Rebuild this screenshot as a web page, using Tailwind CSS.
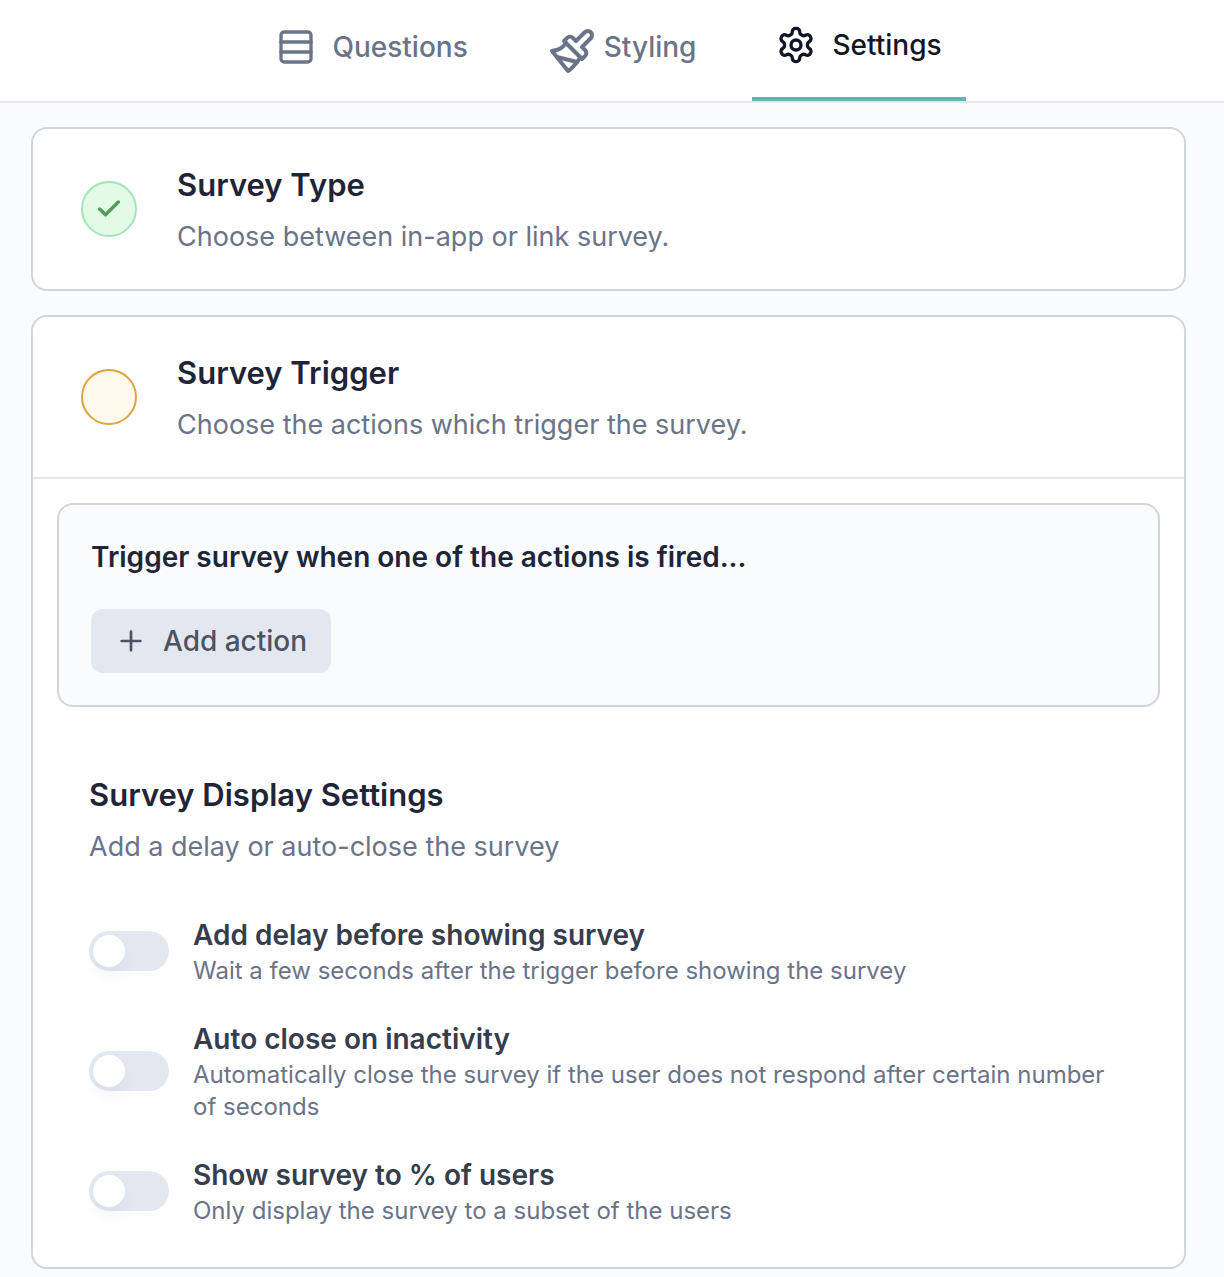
<!DOCTYPE html>
<html lang="en">
<head>
<meta charset="utf-8">
<meta name="viewport" content="width=device-width, initial-scale=1">
<title>Survey settings</title>
<script src="https://cdn.jsdelivr.net/npm/@tailwindcss/browser@4"></script>
</head>
<body class="min-h-screen bg-[#f9fbfd] font-['Inter',sans-serif] text-[#1f2536]">
<header class="border-b-2 border-gray-200 bg-white">
  <nav class="flex h-[101px] justify-center gap-8 pr-1.5 text-[28px] leading-10 font-medium text-[#6a7388]" aria-label="Survey editor">
    <a href="#questions" class="flex items-center gap-4 px-6 pb-2">
      <svg class="size-10" viewBox="0 0 24 24" fill="none" stroke="currentColor" stroke-width="2" stroke-linecap="round" stroke-linejoin="round" aria-hidden="true"><rect x="3" y="3" width="18" height="18" rx="2"/><path d="M21 9H3M21 15H3"/></svg>
      Questions
    </a>
    <a href="#styling" class="flex items-center gap-4 px-6 pb-2">
      <span class="block size-10 overflow-visible"><svg class="size-12 max-w-none" viewBox="0 0 24 24" fill="none" stroke="currentColor" stroke-width="2" stroke-linecap="round" stroke-linejoin="round" aria-hidden="true"><path d="M18.37 2.63 14 7l-1.59-1.59a2 2 0 0 0-2.82 0L8 7l9 9 1.59-1.59a2 2 0 0 0 0-2.82L17 10l4.37-4.37a2.12 2.12 0 1 0-3-3Z"/><path d="M9 8c-2 3-4 3.5-7 4l8 10c2-1 6-6 6-7"/><path d="M14.5 17.5 4.5 15"/></svg></span>
      Styling
    </a>
    <a href="#settings" aria-current="page" class="flex items-center gap-4 border-b-4 border-[#5bb9af] px-6 pb-2 text-[#111524]">
      <svg class="size-10" viewBox="0 0 24 24" fill="none" stroke="currentColor" stroke-width="2" stroke-linecap="round" stroke-linejoin="round" aria-hidden="true"><path d="M12.22 2h-.44a2 2 0 0 0-2 2v.18a2 2 0 0 1-1 1.73l-.43.25a2 2 0 0 1-2 0l-.15-.08a2 2 0 0 0-2.73.73l-.22.38a2 2 0 0 0 .73 2.73l.15.1a2 2 0 0 1 1 1.72v.51a2 2 0 0 1-1 1.74l-.15.09a2 2 0 0 0-.73 2.73l.22.38a2 2 0 0 0 2.73.73l.15-.08a2 2 0 0 1 2 0l.43.25a2 2 0 0 1 1 1.73V20a2 2 0 0 0 2 2h.44a2 2 0 0 0 2-2v-.18a2 2 0 0 1 1-1.73l.43-.25a2 2 0 0 1 2 0l.15.08a2 2 0 0 0 2.73-.73l.22-.39a2 2 0 0 0-.73-2.73l-.15-.08a2 2 0 0 1-1-1.74v-.5a2 2 0 0 1 1-1.74l.15-.09a2 2 0 0 0 .73-2.73l-.22-.38a2 2 0 0 0-2.73-.73l-.15.08a2 2 0 0 1-2 0l-.43-.25a2 2 0 0 1-1-1.73V4a2 2 0 0 0-2-2z"/><circle cx="12" cy="12" r="3"/></svg>
      Settings
    </a>
  </nav>
</header>

<main class="flex flex-col gap-6 pt-6 pr-[38px] pb-2 pl-[31px]">
  <section class="rounded-2xl border-2 border-gray-300 bg-white">
    <button type="button" aria-expanded="false" class="flex w-full items-center gap-10 px-12 py-8 text-left">
      <span class="flex size-14 shrink-0 items-center justify-center rounded-full border-2 border-[#a3e6b5] bg-[#e2fae6] text-[#4f9e5b]">
        <svg class="size-7" viewBox="0 0 24 24" fill="none" stroke="currentColor" stroke-width="3" stroke-linecap="round" stroke-linejoin="round" aria-hidden="true"><path d="M20 6 9 17l-5-5"/></svg>
      </span>
      <span class="flex flex-col gap-2">
        <span class="text-[31px] leading-12 font-semibold">Survey Type</span>
        <span class="text-[27px] leading-10 text-[#6a7388]">Choose between in-app or link survey.</span>
      </span>
    </button>
  </section>

  <section class="rounded-2xl border-2 border-gray-300 bg-white">
    <button type="button" aria-expanded="true" class="flex w-full items-center gap-10 px-12 py-8 text-left">
      <span class="size-14 shrink-0 rounded-full border-2 border-[#e3a33c] bg-[#fefaec]"></span>
      <span class="flex flex-col gap-2">
        <span class="text-[31px] leading-12 font-semibold">Survey Trigger</span>
        <span class="text-[27px] leading-10 text-[#6a7388]">Choose the actions which trigger the survey.</span>
      </span>
    </button>

    <div class="border-t-2 border-gray-200 px-6 pt-6 pb-10">
      <div class="rounded-2xl border-2 border-gray-300 bg-[#f9fbfd] p-8">
        <h2 class="text-[28px] leading-10 font-semibold">Trigger survey when one of the actions is fired...</h2>
        <button type="button" class="mt-8 flex h-16 items-center gap-4 rounded-xl bg-[#e3e8f0] px-6 text-[28px] leading-10 font-medium text-[#4d5361]">
          <svg class="size-8" viewBox="0 0 24 24" fill="none" stroke="currentColor" stroke-width="2" stroke-linecap="round" aria-hidden="true"><path d="M5 12h14M12 5v14"/></svg>
          Add action
        </button>
      </div>

      <div class="mt-16 px-8">
        <h2 class="text-[31px] leading-12 font-semibold">Survey Display Settings</h2>
        <p class="mt-2 text-[27px] leading-10 text-[#6a7388]">Add a delay or auto-close the survey</p>

        <div class="mt-12 flex flex-col gap-8">
          <div class="flex items-center gap-6">
            <input id="delay" type="checkbox" role="switch" class="flex h-10 w-20 shrink-0 appearance-none items-center rounded-full bg-[#e3e8f0] px-1 before:size-8 before:rounded-full before:bg-white before:shadow-[0_10px_15px_rgb(0_0_0/0.04)] before:content-['']">
            <label for="delay" class="flex flex-col">
              <span class="text-[28px] leading-10 font-semibold text-[#363d4d]">Add delay before showing survey</span>
              <span class="text-2xl text-[#6a7388]">Wait a few seconds after the trigger before showing the survey</span>
            </label>
          </div>
          <div class="flex items-center gap-6">
            <input id="autoclose" type="checkbox" role="switch" class="flex h-10 w-20 shrink-0 appearance-none items-center rounded-full bg-[#e3e8f0] px-1 before:size-8 before:rounded-full before:bg-white before:shadow-[0_10px_15px_rgb(0_0_0/0.04)] before:content-['']">
            <label for="autoclose" class="flex flex-col">
              <span class="text-[28px] leading-10 font-semibold text-[#363d4d]">Auto close on inactivity</span>
              <span class="text-2xl text-[#6a7388]">Automatically close the survey if the user does not respond after certain number of seconds</span>
            </label>
          </div>
          <div class="flex items-center gap-6">
            <input id="percentage" type="checkbox" role="switch" class="flex h-10 w-20 shrink-0 appearance-none items-center rounded-full bg-[#e3e8f0] px-1 before:size-8 before:rounded-full before:bg-white before:shadow-[0_10px_15px_rgb(0_0_0/0.04)] before:content-['']">
            <label for="percentage" class="flex flex-col">
              <span class="text-[28px] leading-10 font-semibold text-[#363d4d]">Show survey to % of users</span>
              <span class="text-2xl text-[#6a7388]">Only display the survey to a subset of the users</span>
            </label>
          </div>
        </div>
      </div>
    </div>
  </section>
</main>
</body>
</html>
